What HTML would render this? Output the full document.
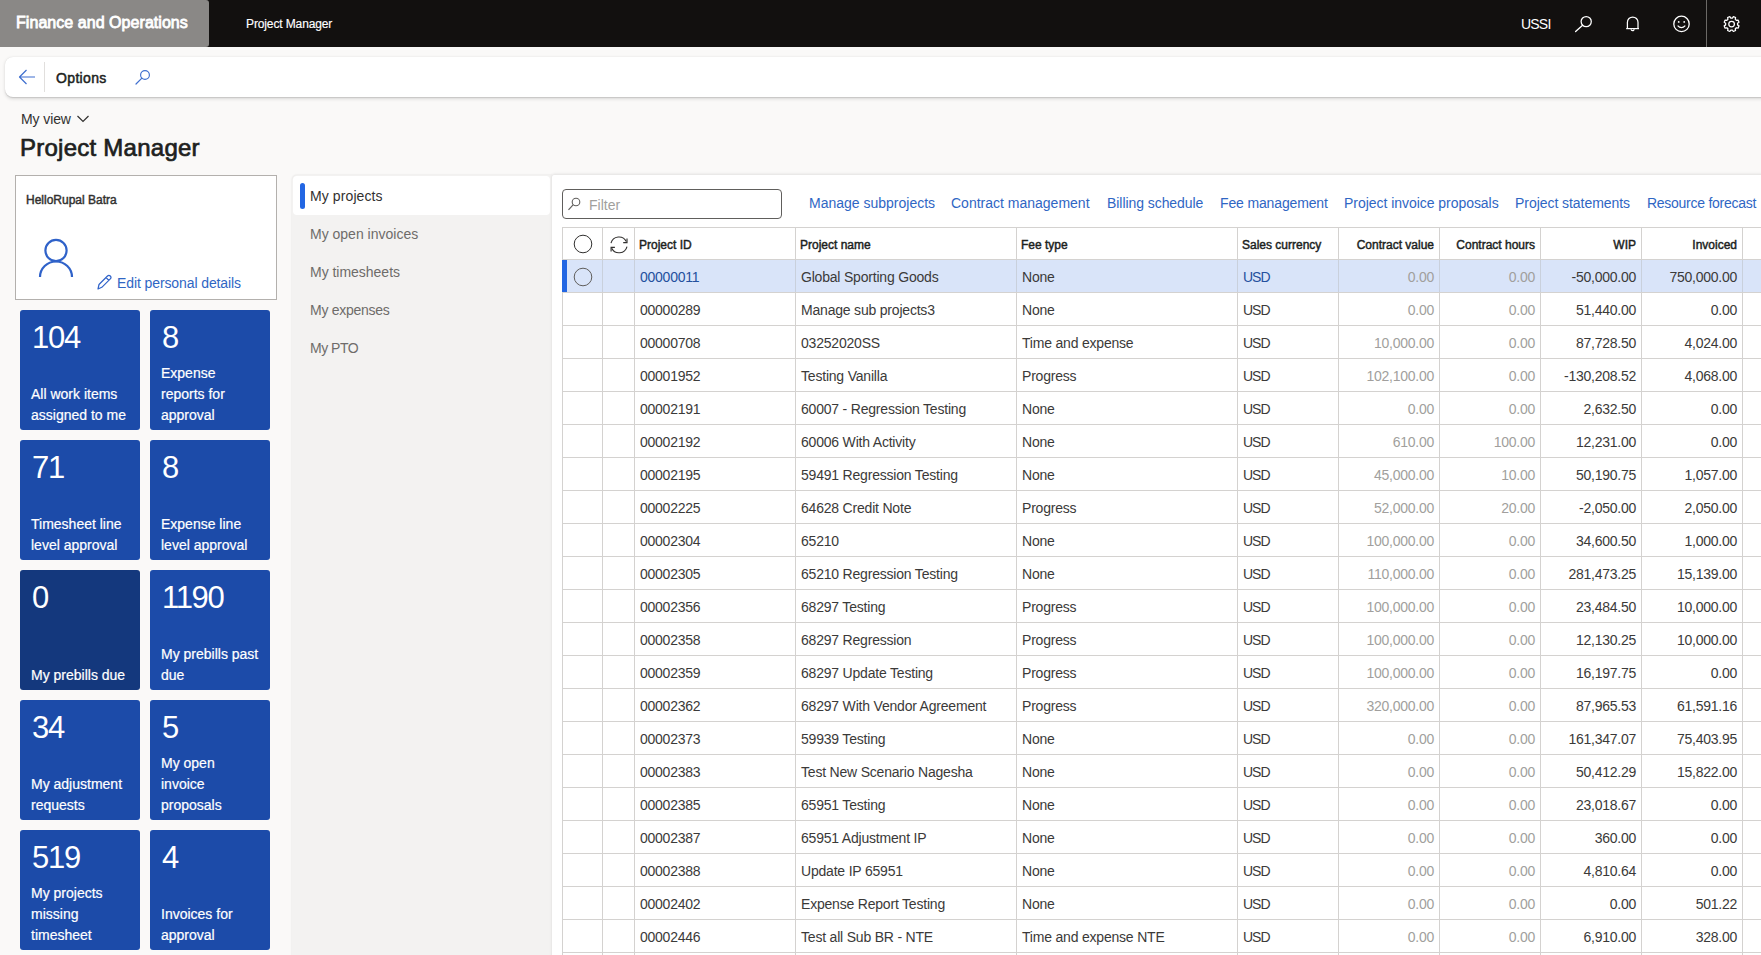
<!DOCTYPE html><html><head><meta charset="utf-8"><style>
*{box-sizing:border-box;margin:0;padding:0}
html,body{width:1761px;height:955px;overflow:hidden;background:#faf9f8;font-family:"Liberation Sans",sans-serif;color:#323130}
.a{position:absolute;white-space:nowrap}
#top{position:absolute;left:0;top:0;width:1761px;height:47px;background:#12100f}
#brand{position:absolute;left:0;top:0;width:209px;height:47px;background:#8a8886;border-radius:0 3px 3px 0}
#opt{position:absolute;left:5px;top:57px;width:1770px;height:40px;background:#fff;border-radius:8px;box-shadow:0 1.6px 3.6px rgba(0,0,0,.13),0 .3px .9px rgba(0,0,0,.11)}
.tile{position:absolute;width:120px;height:120px;background:#1c4ba9;border-radius:3px;color:#fff}
.tile.dk{background:#14387d}
.tile .n{position:absolute;left:12px;top:11.5px;font-size:31px;line-height:32px;letter-spacing:-1.3px}
.tile .l{position:absolute;left:11px;bottom:4px;font-size:14px;line-height:21px;-webkit-text-stroke:0.2px #fff}
#card{position:absolute;left:15px;top:175px;width:262px;height:125px;background:#fff;border:1px solid #b3b0ad}
#nav{position:absolute;left:291.5px;top:175px;width:260.5px;height:800px;background:#f3f2f1;border-radius:5px 0 0 0;box-shadow:0 0 2px rgba(0,0,0,.12)}
#navsel{position:absolute;left:293px;top:176px;width:257px;height:39px;background:#fff;border-radius:4px}
.nav{position:absolute;left:310px;font-size:14px;color:#605e5c}
#main{position:absolute;left:552px;top:175px;width:1220px;height:800px;background:#fff;border-radius:2px 0 0 0;box-shadow:0 -0.5px 3px rgba(0,0,0,.10)}
#filter{position:absolute;left:562px;top:189px;width:220px;height:30px;border:1px solid #605e5c;border-radius:4px;background:#fff}
.lnk{position:absolute;top:194px;font-size:14px;color:#2f66c4}
.hl{position:absolute;background:#d4d2d0}
.vl{position:absolute;background:#d4d2d0}
.cell{position:absolute;font-size:14px;line-height:18px;color:#3b3a39;letter-spacing:-0.2px}
.num{letter-spacing:-0.25px}
.hd{position:absolute;font-size:12px;font-weight:400;line-height:16px;color:#201f1e;-webkit-text-stroke:0.45px #201f1e}
.r{text-align:right}
.g{color:#a19f9d}
</style></head><body>
<div id="top"></div><div id="brand"></div>
<div class="a" style="left:16px;top:13px;font-size:16px;font-weight:400;color:#fff;line-height:20px;letter-spacing:0.05px;-webkit-text-stroke:0.8px #fff">Finance and Operations</div>
<div class="a" style="left:246px;top:16px;font-size:12px;color:#fff;line-height:16px;letter-spacing:-0.12px;-webkit-text-stroke:0.15px #fff">Project Manager</div>
<div class="a" style="left:1521px;top:15px;font-size:14px;color:#fff;line-height:18px;letter-spacing:-0.8px">USSI</div>
<svg class="a" style="left:1570px;top:12px" width="26" height="24" viewBox="0 0 26 24"><circle cx="16.2" cy="9.6" r="5.1" fill="none" stroke="#fff" stroke-width="1.25"/><line x1="12.6" y1="13.2" x2="5.6" y2="19.6" stroke="#fff" stroke-width="1.3" stroke-linecap="round"/></svg>
<svg class="a" style="left:1622px;top:14px" width="22" height="20" viewBox="0 0 22 20"><path d="M5.4 14.6 L5.4 8.3 A5.3 5.3 0 0 1 16 8.3 L16 14.6" fill="none" stroke="#fff" stroke-width="1.25"/><line x1="4.2" y1="14.6" x2="17" y2="14.6" stroke="#fff" stroke-width="1.25"/><path d="M9.1 15.2 A1.5 1.5 0 0 0 12.1 15.2" fill="none" stroke="#fff" stroke-width="1.2"/></svg>
<svg class="a" style="left:1671px;top:14px" width="22" height="20" viewBox="0 0 22 20"><circle cx="10.5" cy="9.9" r="7.7" fill="none" stroke="#fff" stroke-width="1.3"/><circle cx="7.7" cy="7.9" r="0.9" fill="#fff"/><circle cx="13.2" cy="7.9" r="0.9" fill="#fff"/><path d="M6.6 11.6 Q10.4 15.6 14.3 11.6" fill="none" stroke="#fff" stroke-width="1.2"/></svg>
<div class="a" style="left:1706px;top:0;width:1px;height:47px;background:#6b6966"></div>
<svg class="a" style="left:1721px;top:14px" width="22" height="20" viewBox="0 0 22 20"><path d="M11.38 4.15 L12.37 2.71 A7.6 7.6 0 0 1 14.57 3.62 L14.25 5.34 A6 6 0 0 1 15.36 6.45 L17.08 6.13 A7.6 7.6 0 0 1 17.99 8.33 L16.55 9.32 A6 6 0 0 1 16.55 10.88 L17.99 11.87 A7.6 7.6 0 0 1 17.08 14.07 L15.36 13.75 A6 6 0 0 1 14.25 14.86 L14.57 16.58 A7.6 7.6 0 0 1 12.37 17.49 L11.38 16.05 A6 6 0 0 1 9.82 16.05 L8.83 17.49 A7.6 7.6 0 0 1 6.63 16.58 L6.95 14.86 A6 6 0 0 1 5.84 13.75 L4.12 14.07 A7.6 7.6 0 0 1 3.21 11.87 L4.65 10.88 A6 6 0 0 1 4.65 9.32 L3.21 8.33 A7.6 7.6 0 0 1 4.12 6.13 L5.84 6.45 A6 6 0 0 1 6.95 5.34 L6.63 3.62 A7.6 7.6 0 0 1 8.83 2.71 L9.82 4.15 A6 6 0 0 1 11.38 4.15 Z" fill="none" stroke="#fff" stroke-width="1.25" stroke-linejoin="round"/><circle cx="10.6" cy="10.1" r="2.8" fill="none" stroke="#fff" stroke-width="1.25"/></svg>
<div id="opt"></div>
<svg class="a" style="left:17px;top:68px" width="20" height="18" viewBox="0 0 20 18"><path d="M9.5 2 L2.5 9 L9.5 16 M2.5 9 L18 9" fill="none" stroke="#3f6fcf" stroke-width="1.2" stroke-linejoin="round"/></svg>
<div class="a" style="left:44px;top:62px;width:1px;height:30px;background:#e1dfdd"></div>
<div class="a" style="left:56px;top:69px;font-size:14px;font-weight:400;color:#201f1e;line-height:18px;letter-spacing:0.35px;-webkit-text-stroke:0.5px #201f1e">Options</div>
<svg class="a" style="left:133px;top:68px" width="20" height="18" viewBox="0 0 20 18"><circle cx="12" cy="7" r="4.4" fill="none" stroke="#3f6fcf" stroke-width="1.15"/><line x1="8.9" y1="10.1" x2="3" y2="16" stroke="#3f6fcf" stroke-width="1.2" stroke-linecap="round"/></svg>
<div class="a" style="left:21px;top:110px;font-size:14px;color:#323130;line-height:18px;letter-spacing:-0.1px">My view</div>
<svg class="a" style="left:76px;top:113px" width="14" height="12" viewBox="0 0 14 12"><path d="M1.5 3 L7 8.5 L12.5 3" fill="none" stroke="#323130" stroke-width="1.2"/></svg>
<div class="a" style="left:20px;top:134px;font-size:24px;font-weight:400;color:#201f1e;line-height:28px;letter-spacing:0.25px;-webkit-text-stroke:0.7px #201f1e">Project Manager</div>
<div id="card"></div>
<div class="a" style="left:26px;top:193px;font-size:12px;font-weight:400;color:#323130;line-height:14px;letter-spacing:0px;-webkit-text-stroke:0.45px #323130">HelloRupal Batra</div>
<svg class="a" style="left:36px;top:236px" width="40" height="42" viewBox="0 0 40 42"><circle cx="20" cy="14.5" r="10.6" fill="none" stroke="#2f62c9" stroke-width="2.2"/><path d="M4 41 A16 15.5 0 0 1 36 41" fill="none" stroke="#2f62c9" stroke-width="2.2"/></svg>
<svg class="a" style="left:96px;top:274px" width="16" height="17" viewBox="0 0 16 17"><path d="M2 15 L3 10.5 L11.5 2 A1.8 1.8 0 0 1 14.3 4.8 L5.8 13.3 Z M10 3.5 L12.8 6.3" fill="none" stroke="#2f62c9" stroke-width="1.2" stroke-linejoin="round"/></svg>
<div class="a" style="left:117px;top:274px;font-size:14px;color:#2f66c4;line-height:18px;letter-spacing:-0.1px">Edit personal details</div>
<div class="tile" style="left:20px;top:310px"><div class="n">104</div><div class="l">All work items<br>assigned to me</div></div>
<div class="tile" style="left:150px;top:310px"><div class="n">8</div><div class="l">Expense<br>reports for<br>approval</div></div>
<div class="tile" style="left:20px;top:440px"><div class="n">71</div><div class="l">Timesheet line<br>level approval</div></div>
<div class="tile" style="left:150px;top:440px"><div class="n">8</div><div class="l">Expense line<br>level approval</div></div>
<div class="tile dk" style="left:20px;top:570px"><div class="n">0</div><div class="l">My prebills due</div></div>
<div class="tile" style="left:150px;top:570px"><div class="n">1190</div><div class="l">My prebills past<br>due</div></div>
<div class="tile" style="left:20px;top:700px"><div class="n">34</div><div class="l">My adjustment<br>requests</div></div>
<div class="tile" style="left:150px;top:700px"><div class="n">5</div><div class="l">My open<br>invoice<br>proposals</div></div>
<div class="tile" style="left:20px;top:830px"><div class="n">519</div><div class="l">My projects<br>missing<br>timesheet</div></div>
<div class="tile" style="left:150px;top:830px"><div class="n">4</div><div class="l">Invoices for<br>approval</div></div>
<div id="nav"></div><div id="navsel"></div>
<div class="a" style="left:300px;top:183px;width:5px;height:26px;background:#2266e3;border-radius:3px"></div>
<div class="nav a" style="top:187px;color:#323130;line-height:18px;letter-spacing:0.1px">My projects</div>
<div class="nav a" style="top:225px;color:#6e6c6a;line-height:18px;letter-spacing:0px">My open invoices</div>
<div class="nav a" style="top:263px;color:#6e6c6a;line-height:18px;letter-spacing:-0.02px">My timesheets</div>
<div class="nav a" style="top:301px;color:#6e6c6a;line-height:18px;letter-spacing:-0.28px">My expenses</div>
<div class="nav a" style="top:339px;color:#6e6c6a;line-height:18px;letter-spacing:-0.5px">My PTO</div>
<div id="main"></div>
<div id="filter"></div>
<svg class="a" style="left:566px;top:195px" width="16" height="18" viewBox="0 0 16 18"><circle cx="10" cy="7" r="3.8" fill="none" stroke="#605e5c" stroke-width="1.1"/><line x1="7.3" y1="9.7" x2="2.5" y2="14.8" stroke="#605e5c" stroke-width="1.2"/></svg>
<div class="a" style="left:589px;top:196px;font-size:14px;color:#a19f9d;line-height:18px">Filter</div>
<div class="lnk a" style="left:809px;line-height:18px;letter-spacing:0px">Manage subprojects</div>
<div class="lnk a" style="left:951px;line-height:18px;letter-spacing:0px">Contract management</div>
<div class="lnk a" style="left:1107px;line-height:18px;letter-spacing:-0.06px">Billing schedule</div>
<div class="lnk a" style="left:1220px;line-height:18px;letter-spacing:-0.14px">Fee management</div>
<div class="lnk a" style="left:1344px;line-height:18px;letter-spacing:-0.04px">Project invoice proposals</div>
<div class="lnk a" style="left:1515px;line-height:18px;letter-spacing:-0.05px">Project statements</div>
<div class="lnk a" style="left:1647px;line-height:18px;letter-spacing:-0.27px">Resource forecast</div>
<div class="a" style="left:562px;top:260px;width:1200px;height:32px;background:#d9e4f9"></div>
<div class="a" style="left:562px;top:260px;width:5px;height:32px;background:#2266e3"></div>
<div class="hl" style="left:562px;top:227px;width:1200px;height:1px"></div>
<div class="hl" style="left:562px;top:259px;width:1200px;height:1px"></div>
<div class="hl" style="left:562px;top:292px;width:1200px;height:1px"></div>
<div class="hl" style="left:562px;top:325px;width:1200px;height:1px"></div>
<div class="hl" style="left:562px;top:358px;width:1200px;height:1px"></div>
<div class="hl" style="left:562px;top:391px;width:1200px;height:1px"></div>
<div class="hl" style="left:562px;top:424px;width:1200px;height:1px"></div>
<div class="hl" style="left:562px;top:457px;width:1200px;height:1px"></div>
<div class="hl" style="left:562px;top:490px;width:1200px;height:1px"></div>
<div class="hl" style="left:562px;top:523px;width:1200px;height:1px"></div>
<div class="hl" style="left:562px;top:556px;width:1200px;height:1px"></div>
<div class="hl" style="left:562px;top:589px;width:1200px;height:1px"></div>
<div class="hl" style="left:562px;top:622px;width:1200px;height:1px"></div>
<div class="hl" style="left:562px;top:655px;width:1200px;height:1px"></div>
<div class="hl" style="left:562px;top:688px;width:1200px;height:1px"></div>
<div class="hl" style="left:562px;top:721px;width:1200px;height:1px"></div>
<div class="hl" style="left:562px;top:754px;width:1200px;height:1px"></div>
<div class="hl" style="left:562px;top:787px;width:1200px;height:1px"></div>
<div class="hl" style="left:562px;top:820px;width:1200px;height:1px"></div>
<div class="hl" style="left:562px;top:853px;width:1200px;height:1px"></div>
<div class="hl" style="left:562px;top:886px;width:1200px;height:1px"></div>
<div class="hl" style="left:562px;top:919px;width:1200px;height:1px"></div>
<div class="hl" style="left:562px;top:952px;width:1200px;height:1px"></div>
<div class="vl" style="left:562px;top:227px;width:1px;height:740px"></div>
<div class="vl" style="left:602px;top:227px;width:1px;height:740px"></div>
<div class="vl" style="left:634px;top:227px;width:1px;height:740px"></div>
<div class="vl" style="left:795px;top:227px;width:1px;height:740px"></div>
<div class="vl" style="left:1016px;top:227px;width:1px;height:740px"></div>
<div class="vl" style="left:1237px;top:227px;width:1px;height:740px"></div>
<div class="vl" style="left:1338px;top:227px;width:1px;height:740px"></div>
<div class="vl" style="left:1439px;top:227px;width:1px;height:740px"></div>
<div class="vl" style="left:1540px;top:227px;width:1px;height:740px"></div>
<div class="vl" style="left:1641px;top:227px;width:1px;height:740px"></div>
<div class="vl" style="left:1742px;top:227px;width:1px;height:740px"></div>
<div class="a" style="left:602px;top:260px;width:1px;height:32px;background:#c9d0dc"></div>
<div class="a" style="left:634px;top:260px;width:1px;height:32px;background:#c9d0dc"></div>
<div class="a" style="left:795px;top:260px;width:1px;height:32px;background:#c9d0dc"></div>
<div class="a" style="left:1016px;top:260px;width:1px;height:32px;background:#c9d0dc"></div>
<div class="a" style="left:1237px;top:260px;width:1px;height:32px;background:#c9d0dc"></div>
<div class="a" style="left:1338px;top:260px;width:1px;height:32px;background:#c9d0dc"></div>
<div class="a" style="left:1439px;top:260px;width:1px;height:32px;background:#c9d0dc"></div>
<div class="a" style="left:1540px;top:260px;width:1px;height:32px;background:#c9d0dc"></div>
<div class="a" style="left:1641px;top:260px;width:1px;height:32px;background:#c9d0dc"></div>
<div class="a" style="left:1742px;top:260px;width:1px;height:32px;background:#c9d0dc"></div>
<div class="a" style="left:562px;top:260px;width:5px;height:32px;background:#2266e3"></div>
<svg class="a" style="left:573px;top:234px" width="20" height="20" viewBox="0 0 20 20"><circle cx="10" cy="10" r="8.8" fill="none" stroke="#323130" stroke-width="1"/></svg>
<svg class="a" style="left:608px;top:234px" width="22" height="22" viewBox="0 0 22 22"><path d="M3 9.2 A8.2 8.2 0 0 1 18.3 7.6 M19 12.6 A8.2 8.2 0 0 1 3.7 14.2" fill="none" stroke="#323130" stroke-width="1.1"/><path d="M19 4.6 L19 8.6 L15.2 8.6" fill="none" stroke="#323130" stroke-width="1.15"/><path d="M3.1 17.4 L3.1 13.4 L6.9 13.4" fill="none" stroke="#323130" stroke-width="1.15"/></svg>
<div class="hd a" style="left:639px;top:237px">Project ID</div>
<div class="hd a" style="left:800px;top:237px">Project name</div>
<div class="hd a" style="left:1021px;top:237px">Fee type</div>
<div class="hd a" style="left:1242px;top:237px">Sales currency</div>
<div class="hd a r" style="left:1338px;width:96px;top:237px">Contract value</div>
<div class="hd a r" style="left:1439px;width:96px;top:237px">Contract hours</div>
<div class="hd a r" style="left:1540px;width:96px;top:237px">WIP</div>
<div class="hd a r" style="left:1641px;width:96px;top:237px">Invoiced</div>
<svg class="a" style="left:573px;top:267px" width="20" height="20" viewBox="0 0 20 20"><circle cx="10" cy="10" r="8.8" fill="none" stroke="#605e5c" stroke-width="1"/></svg>
<div class="cell a num" style="left:640px;top:268px;color:#24509e">00000011</div>
<div class="cell a" style="left:801px;top:268px">Global Sporting Goods</div>
<div class="cell a" style="left:1022px;top:268px">None</div>
<div class="cell a" style="left:1243px;top:268px;color:#24509e;letter-spacing:-1px">USD</div>
<div class="cell a num r g" style="left:1338px;width:96px;top:268px">0.00</div>
<div class="cell a num r g" style="left:1439px;width:96px;top:268px">0.00</div>
<div class="cell a num r" style="left:1540px;width:96px;top:268px">-50,000.00</div>
<div class="cell a num r" style="left:1641px;width:96px;top:268px">750,000.00</div>
<div class="cell a num" style="left:640px;top:301px;color:#3b3a39">00000289</div>
<div class="cell a" style="left:801px;top:301px">Manage sub projects3</div>
<div class="cell a" style="left:1022px;top:301px">None</div>
<div class="cell a" style="left:1243px;top:301px;color:#3b3a39;letter-spacing:-1px">USD</div>
<div class="cell a num r g" style="left:1338px;width:96px;top:301px">0.00</div>
<div class="cell a num r g" style="left:1439px;width:96px;top:301px">0.00</div>
<div class="cell a num r" style="left:1540px;width:96px;top:301px">51,440.00</div>
<div class="cell a num r" style="left:1641px;width:96px;top:301px">0.00</div>
<div class="cell a num" style="left:640px;top:334px;color:#3b3a39">00000708</div>
<div class="cell a" style="left:801px;top:334px">03252020SS</div>
<div class="cell a" style="left:1022px;top:334px">Time and expense</div>
<div class="cell a" style="left:1243px;top:334px;color:#3b3a39;letter-spacing:-1px">USD</div>
<div class="cell a num r g" style="left:1338px;width:96px;top:334px">10,000.00</div>
<div class="cell a num r g" style="left:1439px;width:96px;top:334px">0.00</div>
<div class="cell a num r" style="left:1540px;width:96px;top:334px">87,728.50</div>
<div class="cell a num r" style="left:1641px;width:96px;top:334px">4,024.00</div>
<div class="cell a num" style="left:640px;top:367px;color:#3b3a39">00001952</div>
<div class="cell a" style="left:801px;top:367px">Testing Vanilla</div>
<div class="cell a" style="left:1022px;top:367px">Progress</div>
<div class="cell a" style="left:1243px;top:367px;color:#3b3a39;letter-spacing:-1px">USD</div>
<div class="cell a num r g" style="left:1338px;width:96px;top:367px">102,100.00</div>
<div class="cell a num r g" style="left:1439px;width:96px;top:367px">0.00</div>
<div class="cell a num r" style="left:1540px;width:96px;top:367px">-130,208.52</div>
<div class="cell a num r" style="left:1641px;width:96px;top:367px">4,068.00</div>
<div class="cell a num" style="left:640px;top:400px;color:#3b3a39">00002191</div>
<div class="cell a" style="left:801px;top:400px">60007 - Regression Testing</div>
<div class="cell a" style="left:1022px;top:400px">None</div>
<div class="cell a" style="left:1243px;top:400px;color:#3b3a39;letter-spacing:-1px">USD</div>
<div class="cell a num r g" style="left:1338px;width:96px;top:400px">0.00</div>
<div class="cell a num r g" style="left:1439px;width:96px;top:400px">0.00</div>
<div class="cell a num r" style="left:1540px;width:96px;top:400px">2,632.50</div>
<div class="cell a num r" style="left:1641px;width:96px;top:400px">0.00</div>
<div class="cell a num" style="left:640px;top:433px;color:#3b3a39">00002192</div>
<div class="cell a" style="left:801px;top:433px">60006 With Activity</div>
<div class="cell a" style="left:1022px;top:433px">None</div>
<div class="cell a" style="left:1243px;top:433px;color:#3b3a39;letter-spacing:-1px">USD</div>
<div class="cell a num r g" style="left:1338px;width:96px;top:433px">610.00</div>
<div class="cell a num r g" style="left:1439px;width:96px;top:433px">100.00</div>
<div class="cell a num r" style="left:1540px;width:96px;top:433px">12,231.00</div>
<div class="cell a num r" style="left:1641px;width:96px;top:433px">0.00</div>
<div class="cell a num" style="left:640px;top:466px;color:#3b3a39">00002195</div>
<div class="cell a" style="left:801px;top:466px">59491 Regression Testing</div>
<div class="cell a" style="left:1022px;top:466px">None</div>
<div class="cell a" style="left:1243px;top:466px;color:#3b3a39;letter-spacing:-1px">USD</div>
<div class="cell a num r g" style="left:1338px;width:96px;top:466px">45,000.00</div>
<div class="cell a num r g" style="left:1439px;width:96px;top:466px">10.00</div>
<div class="cell a num r" style="left:1540px;width:96px;top:466px">50,190.75</div>
<div class="cell a num r" style="left:1641px;width:96px;top:466px">1,057.00</div>
<div class="cell a num" style="left:640px;top:499px;color:#3b3a39">00002225</div>
<div class="cell a" style="left:801px;top:499px">64628 Credit Note</div>
<div class="cell a" style="left:1022px;top:499px">Progress</div>
<div class="cell a" style="left:1243px;top:499px;color:#3b3a39;letter-spacing:-1px">USD</div>
<div class="cell a num r g" style="left:1338px;width:96px;top:499px">52,000.00</div>
<div class="cell a num r g" style="left:1439px;width:96px;top:499px">20.00</div>
<div class="cell a num r" style="left:1540px;width:96px;top:499px">-2,050.00</div>
<div class="cell a num r" style="left:1641px;width:96px;top:499px">2,050.00</div>
<div class="cell a num" style="left:640px;top:532px;color:#3b3a39">00002304</div>
<div class="cell a" style="left:801px;top:532px">65210</div>
<div class="cell a" style="left:1022px;top:532px">None</div>
<div class="cell a" style="left:1243px;top:532px;color:#3b3a39;letter-spacing:-1px">USD</div>
<div class="cell a num r g" style="left:1338px;width:96px;top:532px">100,000.00</div>
<div class="cell a num r g" style="left:1439px;width:96px;top:532px">0.00</div>
<div class="cell a num r" style="left:1540px;width:96px;top:532px">34,600.50</div>
<div class="cell a num r" style="left:1641px;width:96px;top:532px">1,000.00</div>
<div class="cell a num" style="left:640px;top:565px;color:#3b3a39">00002305</div>
<div class="cell a" style="left:801px;top:565px">65210 Regression Testing</div>
<div class="cell a" style="left:1022px;top:565px">None</div>
<div class="cell a" style="left:1243px;top:565px;color:#3b3a39;letter-spacing:-1px">USD</div>
<div class="cell a num r g" style="left:1338px;width:96px;top:565px">110,000.00</div>
<div class="cell a num r g" style="left:1439px;width:96px;top:565px">0.00</div>
<div class="cell a num r" style="left:1540px;width:96px;top:565px">281,473.25</div>
<div class="cell a num r" style="left:1641px;width:96px;top:565px">15,139.00</div>
<div class="cell a num" style="left:640px;top:598px;color:#3b3a39">00002356</div>
<div class="cell a" style="left:801px;top:598px">68297 Testing</div>
<div class="cell a" style="left:1022px;top:598px">Progress</div>
<div class="cell a" style="left:1243px;top:598px;color:#3b3a39;letter-spacing:-1px">USD</div>
<div class="cell a num r g" style="left:1338px;width:96px;top:598px">100,000.00</div>
<div class="cell a num r g" style="left:1439px;width:96px;top:598px">0.00</div>
<div class="cell a num r" style="left:1540px;width:96px;top:598px">23,484.50</div>
<div class="cell a num r" style="left:1641px;width:96px;top:598px">10,000.00</div>
<div class="cell a num" style="left:640px;top:631px;color:#3b3a39">00002358</div>
<div class="cell a" style="left:801px;top:631px">68297 Regression</div>
<div class="cell a" style="left:1022px;top:631px">Progress</div>
<div class="cell a" style="left:1243px;top:631px;color:#3b3a39;letter-spacing:-1px">USD</div>
<div class="cell a num r g" style="left:1338px;width:96px;top:631px">100,000.00</div>
<div class="cell a num r g" style="left:1439px;width:96px;top:631px">0.00</div>
<div class="cell a num r" style="left:1540px;width:96px;top:631px">12,130.25</div>
<div class="cell a num r" style="left:1641px;width:96px;top:631px">10,000.00</div>
<div class="cell a num" style="left:640px;top:664px;color:#3b3a39">00002359</div>
<div class="cell a" style="left:801px;top:664px">68297 Update Testing</div>
<div class="cell a" style="left:1022px;top:664px">Progress</div>
<div class="cell a" style="left:1243px;top:664px;color:#3b3a39;letter-spacing:-1px">USD</div>
<div class="cell a num r g" style="left:1338px;width:96px;top:664px">100,000.00</div>
<div class="cell a num r g" style="left:1439px;width:96px;top:664px">0.00</div>
<div class="cell a num r" style="left:1540px;width:96px;top:664px">16,197.75</div>
<div class="cell a num r" style="left:1641px;width:96px;top:664px">0.00</div>
<div class="cell a num" style="left:640px;top:697px;color:#3b3a39">00002362</div>
<div class="cell a" style="left:801px;top:697px">68297 With Vendor Agreement</div>
<div class="cell a" style="left:1022px;top:697px">Progress</div>
<div class="cell a" style="left:1243px;top:697px;color:#3b3a39;letter-spacing:-1px">USD</div>
<div class="cell a num r g" style="left:1338px;width:96px;top:697px">320,000.00</div>
<div class="cell a num r g" style="left:1439px;width:96px;top:697px">0.00</div>
<div class="cell a num r" style="left:1540px;width:96px;top:697px">87,965.53</div>
<div class="cell a num r" style="left:1641px;width:96px;top:697px">61,591.16</div>
<div class="cell a num" style="left:640px;top:730px;color:#3b3a39">00002373</div>
<div class="cell a" style="left:801px;top:730px">59939 Testing</div>
<div class="cell a" style="left:1022px;top:730px">None</div>
<div class="cell a" style="left:1243px;top:730px;color:#3b3a39;letter-spacing:-1px">USD</div>
<div class="cell a num r g" style="left:1338px;width:96px;top:730px">0.00</div>
<div class="cell a num r g" style="left:1439px;width:96px;top:730px">0.00</div>
<div class="cell a num r" style="left:1540px;width:96px;top:730px">161,347.07</div>
<div class="cell a num r" style="left:1641px;width:96px;top:730px">75,403.95</div>
<div class="cell a num" style="left:640px;top:763px;color:#3b3a39">00002383</div>
<div class="cell a" style="left:801px;top:763px">Test New Scenario Nagesha</div>
<div class="cell a" style="left:1022px;top:763px">None</div>
<div class="cell a" style="left:1243px;top:763px;color:#3b3a39;letter-spacing:-1px">USD</div>
<div class="cell a num r g" style="left:1338px;width:96px;top:763px">0.00</div>
<div class="cell a num r g" style="left:1439px;width:96px;top:763px">0.00</div>
<div class="cell a num r" style="left:1540px;width:96px;top:763px">50,412.29</div>
<div class="cell a num r" style="left:1641px;width:96px;top:763px">15,822.00</div>
<div class="cell a num" style="left:640px;top:796px;color:#3b3a39">00002385</div>
<div class="cell a" style="left:801px;top:796px">65951 Testing</div>
<div class="cell a" style="left:1022px;top:796px">None</div>
<div class="cell a" style="left:1243px;top:796px;color:#3b3a39;letter-spacing:-1px">USD</div>
<div class="cell a num r g" style="left:1338px;width:96px;top:796px">0.00</div>
<div class="cell a num r g" style="left:1439px;width:96px;top:796px">0.00</div>
<div class="cell a num r" style="left:1540px;width:96px;top:796px">23,018.67</div>
<div class="cell a num r" style="left:1641px;width:96px;top:796px">0.00</div>
<div class="cell a num" style="left:640px;top:829px;color:#3b3a39">00002387</div>
<div class="cell a" style="left:801px;top:829px">65951 Adjustment IP</div>
<div class="cell a" style="left:1022px;top:829px">None</div>
<div class="cell a" style="left:1243px;top:829px;color:#3b3a39;letter-spacing:-1px">USD</div>
<div class="cell a num r g" style="left:1338px;width:96px;top:829px">0.00</div>
<div class="cell a num r g" style="left:1439px;width:96px;top:829px">0.00</div>
<div class="cell a num r" style="left:1540px;width:96px;top:829px">360.00</div>
<div class="cell a num r" style="left:1641px;width:96px;top:829px">0.00</div>
<div class="cell a num" style="left:640px;top:862px;color:#3b3a39">00002388</div>
<div class="cell a" style="left:801px;top:862px">Update IP 65951</div>
<div class="cell a" style="left:1022px;top:862px">None</div>
<div class="cell a" style="left:1243px;top:862px;color:#3b3a39;letter-spacing:-1px">USD</div>
<div class="cell a num r g" style="left:1338px;width:96px;top:862px">0.00</div>
<div class="cell a num r g" style="left:1439px;width:96px;top:862px">0.00</div>
<div class="cell a num r" style="left:1540px;width:96px;top:862px">4,810.64</div>
<div class="cell a num r" style="left:1641px;width:96px;top:862px">0.00</div>
<div class="cell a num" style="left:640px;top:895px;color:#3b3a39">00002402</div>
<div class="cell a" style="left:801px;top:895px">Expense Report Testing</div>
<div class="cell a" style="left:1022px;top:895px">None</div>
<div class="cell a" style="left:1243px;top:895px;color:#3b3a39;letter-spacing:-1px">USD</div>
<div class="cell a num r g" style="left:1338px;width:96px;top:895px">0.00</div>
<div class="cell a num r g" style="left:1439px;width:96px;top:895px">0.00</div>
<div class="cell a num r" style="left:1540px;width:96px;top:895px">0.00</div>
<div class="cell a num r" style="left:1641px;width:96px;top:895px">501.22</div>
<div class="cell a num" style="left:640px;top:928px;color:#3b3a39">00002446</div>
<div class="cell a" style="left:801px;top:928px">Test all Sub BR - NTE</div>
<div class="cell a" style="left:1022px;top:928px">Time and expense NTE</div>
<div class="cell a" style="left:1243px;top:928px;color:#3b3a39;letter-spacing:-1px">USD</div>
<div class="cell a num r g" style="left:1338px;width:96px;top:928px">0.00</div>
<div class="cell a num r g" style="left:1439px;width:96px;top:928px">0.00</div>
<div class="cell a num r" style="left:1540px;width:96px;top:928px">6,910.00</div>
<div class="cell a num r" style="left:1641px;width:96px;top:928px">328.00</div>
</body></html>
